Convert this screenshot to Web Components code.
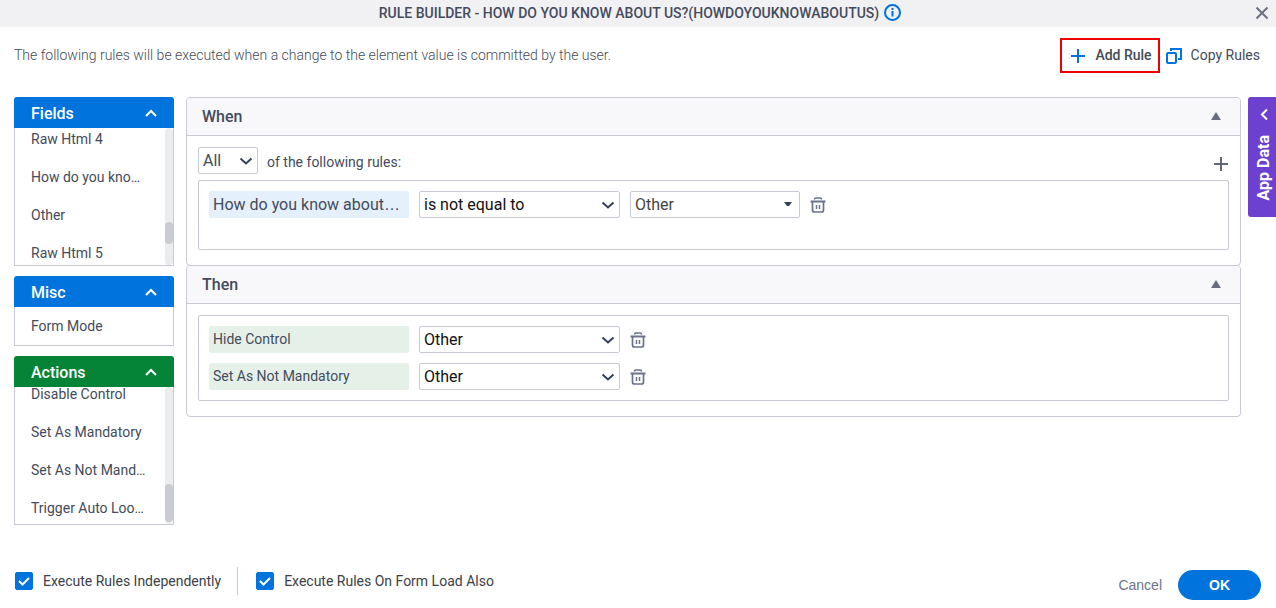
<!DOCTYPE html>
<html lang="en">
<head>
<meta charset="utf-8">
<meta name="viewport" content="width=device-width, initial-scale=1">
<title>Rule Builder</title>
<style>
  body {
    margin: 0;
    background: #fff;
    color: #444b5c;
    font: 14px/20px Roboto, "Liberation Sans", sans-serif;
  }

  /* neighbouring panels share one border */
  rule-panel + rule-panel {
    margin-top: -1px;
  }

  .more {
    font-family: "Liberation Sans", Arial, sans-serif;
  }
</style>
</head>
<body>

<template id="rule-icon-template">
  <style>
    :host {
      display: inline-flex;
      flex: none;
    }

    svg {
      display: block;
      fill: none;
      stroke: currentColor;
      stroke-width: 2;
    }
  </style>
</template>

<template id="rule-dialog-template">
  <style>
    :host {
      display: flex;
      flex-direction: column;
      min-height: 100vh;
    }

    header {
      display: flex;
      align-items: center;
      box-sizing: border-box;
      height: 27px;
      padding: 0 7px 2px 25px;
      background: #f1f1f4;
    }

    h1 {
      display: flex;
      flex: 1;
      align-items: center;
      justify-content: center;
      gap: 5px;
      margin: 0;
      font-size: 14px;
      font-weight: 500;
    }

    h1 rule-icon {
      color: #0073dc;
    }

    .close {
      display: flex;
      padding: 0;
      border: 0;
      background: none;
      color: #6b7080;
    }

    .toolbar {
      display: flex;
      align-items: center;
      height: 35px;
      padding: 11px 16px 24px 14px;
    }

    .toolbar p {
      flex: 1;
      margin: 0;
      padding-bottom: 2px;
      font-weight: 300;
    }

    main {
      display: flex;
      align-items: flex-start;
      padding-left: 14px;
    }

    .side {
      display: flex;
      flex-direction: column;
      flex: none;
      width: 160px;
      gap: 10px;
      margin-right: 12px;
    }

    .panels {
      flex: 1;
      min-width: 0;
      margin-right: 7px;
    }

    footer {
      display: flex;
      align-items: flex-end;
      justify-content: space-between;
      margin-top: auto;
      padding: 0 15px 8px;
    }
  </style>
  <header>
    <h1><slot name="title"></slot><rule-icon name="info"></rule-icon></h1>
    <button class="close" aria-label="Close"><rule-icon name="close"></rule-icon></button>
  </header>
  <div class="toolbar">
    <p><slot name="intro"></slot></p>
    <slot name="tools"></slot>
  </div>
  <main>
    <div class="side"><slot name="side"></slot></div>
    <div class="panels"><slot></slot></div>
    <slot name="tab"></slot>
  </main>
  <footer>
    <slot name="options"></slot>
    <slot name="buttons"></slot>
  </footer>
</template>

<template id="tool-button-template">
  <style>
    :host {
      display: block;
    }

    button {
      display: flex;
      align-items: center;
      gap: 9px;
      height: 35px;
      padding: 0 0 0 6px;
      border: 0;
      background: none;
      color: inherit;
      font: inherit;
    }

    span {
      padding-bottom: 2px;
    }

    rule-icon {
      color: #0073dc;
    }

    :host([highlight]) button {
      gap: 10px;
      padding: 0 6px 0 9px;
      border: 2px solid #f00000;
      font-weight: 500;
    }
  </style>
  <button><rule-icon></rule-icon><span><slot></slot></span></button>
</template>

<template id="side-group-template">
  <style>
    :host {
      --head: #0073dc;
      display: block;
    }

    :host([kind="actions"]) {
      --head: #058337;
    }

    button {
      display: flex;
      align-items: center;
      justify-content: space-between;
      width: 100%;
      height: 31px;
      padding: 2px 17px 0;
      border: 0;
      border-radius: 3px 3px 0 0;
      background: var(--head);
      color: #fff;
      font: inherit;
      font-size: 16px;
      font-weight: 500;
    }

    button rule-icon {
      padding-bottom: 2px;
    }

    .body {
      display: flex;
      border: 1px solid #c8cad3;
      border-top: 0;
    }

    ul {
      flex: 1;
      min-width: 0;
      max-height: 137px;
      margin: 0;
      padding: 0;
      overflow-y: auto;
      list-style: none;
      scrollbar-width: none;
    }

    ::slotted(li) {
      padding: 9px 0 9px 16px;
      white-space: nowrap;
    }

    .track {
      display: none;
      flex: none;
      flex-direction: column;
      width: 8px;
      border-radius: 4px;
      background: #ebecee;
    }

    :host([thumb]) .track {
      display: flex;
    }

    .thumb {
      border-radius: 4px;
      background: #c9ccd1;
    }
  </style>
  <button aria-expanded="true"><slot name="title"></slot><rule-icon name="up"></rule-icon></button>
  <div class="body">
    <ul><slot></slot></ul>
    <div class="track"><div class="thumb"></div></div>
  </div>
</template>

<template id="rule-panel-template">
  <style>
    :host {
      display: block;
      border: 1px solid #c8cad3;
      border-radius: 4px;
      overflow: hidden;
    }

    header {
      display: flex;
      align-items: center;
      justify-content: space-between;
      height: 37px;
      padding: 0 18px 0 15px;
      border-bottom: 1px solid #c8cad3;
      background: #f8f8fa;
    }

    h2 {
      margin: 0;
      font-size: 16px;
      font-weight: 500;
    }

    button {
      display: flex;
      padding: 0 0 2px;
      border: 0;
      background: none;
      color: #686e7e;
    }

    .body {
      display: flex;
      flex-direction: column;
      gap: 6px;
      padding: 11px 11px 15px;
    }

    .rows {
      display: flex;
      flex-direction: column;
      box-sizing: border-box;
      gap: 10px;
      min-height: 70px;
      padding: 10px;
      border: 1px solid #c8cad3;
      border-radius: 2px;
    }
  </style>
  <header>
    <h2><slot name="title"></slot></h2>
    <button aria-label="Collapse"><rule-icon name="triangle"></rule-icon></button>
  </header>
  <div class="body">
    <slot name="match"></slot>
    <div class="rows"><slot></slot></div>
  </div>
</template>

<template id="match-row-template">
  <style>
    :host {
      display: flex;
      align-items: center;
      gap: 9px;
    }

    span {
      flex: 1;
      padding-top: 2px;
    }

    button {
      display: flex;
      padding: 6px 1px 0 0;
      border: 0;
      background: none;
      color: #60677a;
    }
  </style>
  <slot name="select"></slot>
  <span><slot></slot></span>
  <button aria-label="Add condition"><rule-icon name="plus"></rule-icon></button>
</template>

<template id="rule-row-template">
  <style>
    :host {
      display: flex;
      align-items: center;
      gap: 10px;
    }

    .chip {
      flex: none;
      box-sizing: border-box;
      width: 200px;
      height: 27px;
      padding: 0 4px;
      overflow: hidden;
      border-radius: 2px;
      background: #e5f1e8;
      line-height: 27px;
      white-space: nowrap;
    }

    :host([kind="field"]) .chip {
      background: #e4f0fb;
      font-size: 16px;
    }

    button {
      display: flex;
      padding: 0;
      border: 0;
      background: none;
      color: #69738b;
    }
  </style>
  <div class="chip"><slot name="chip"></slot></div>
  <slot></slot>
  <button aria-label="Delete"><rule-icon name="trash"></rule-icon></button>
</template>

<template id="rule-select-template">
  <style>
    :host {
      display: inline-grid;
      flex: none;
      width: 201px;
      color: #111;
    }

    :host([size="small"]) {
      width: 60px;
      color: #444b5c;
    }

    :host([look="combo"]) {
      width: 170px;
      color: #444;
    }

    select {
      grid-area: 1 / 1;
      box-sizing: border-box;
      width: 100%;
      height: 27px;
      padding: 0 24px 0 4px;
      border: 1px solid #c8cad3;
      border-radius: 2px;
      appearance: none;
      background: #fff;
      color: inherit;
      font: inherit;
      font-size: 16px;
    }

    rule-icon {
      grid-area: 1 / 1;
      align-self: center;
      justify-self: end;
      margin-right: 5px;
      color: #344056;
      pointer-events: none;
    }

    :host([look="combo"]) rule-icon {
      margin-right: 8px;
    }
  </style>
  <select></select>
  <rule-icon name="down"></rule-icon>
</template>

<template id="rule-check-template">
  <style>
    :host {
      display: block;
    }

    label {
      display: flex;
      align-items: center;
      gap: 10px;
      color: #3c4048;
    }

    .box {
      display: grid;
      color: #fff;
    }

    input,
    rule-icon {
      grid-area: 1 / 1;
    }

    input {
      width: 18px;
      height: 18px;
      margin: 0;
      border: 1px solid #0073dc;
      border-radius: 2px;
      appearance: none;
    }

    input:checked {
      background: #0073dc;
    }

    rule-icon {
      pointer-events: none;
    }
  </style>
  <label><span class="box"><input type="checkbox" checked><rule-icon name="check"></rule-icon></span><slot></slot></label>
</template>

<template id="check-group-template">
  <style>
    :host {
      display: flex;
      align-items: center;
      height: 28px;
      margin-bottom: 5px;
    }

    ::slotted(:not(:first-child)) {
      margin-left: 16px;
      padding: 4px 0 4px 18px;
      border-left: 1px solid #c8cad3;
    }
  </style>
  <slot></slot>
</template>

<template id="dialog-buttons-template">
  <style>
    :host {
      display: flex;
      align-items: center;
      gap: 16px;
      font-family: "Liberation Sans", Arial, sans-serif;
    }

    button {
      height: 30px;
      padding: 0;
      border: 0;
      background: none;
      color: #6d748a;
      font: inherit;
    }

    .ok {
      width: 83px;
      border-radius: 15px;
      background: #0073dc;
      color: #fff;
      font-weight: bold;
    }
  </style>
  <button><slot name="cancel"></slot></button>
  <button class="ok"><slot name="ok"></slot></button>
</template>

<template id="data-tab-template">
  <style>
    :host {
      display: block;
      flex: none;
    }

    button {
      display: flex;
      flex-direction: column;
      align-items: center;
      gap: 14px;
      box-sizing: border-box;
      width: 28px;
      height: 120px;
      padding: 11px 0 0 3px;
      border: 0;
      border-radius: 3px 0 0 3px;
      background: #6d40cf;
      color: #fff;
      font: bold 16px/20px Roboto, "Liberation Sans", sans-serif;
    }

    span {
      writing-mode: vertical-rl;
      transform: rotate(180deg);
    }
  </style>
  <button><rule-icon name="left"></rule-icon><span><slot></slot></span></button>
</template>

<rule-dialog>
  <span slot="title">RULE BUILDER - HOW DO YOU KNOW ABOUT US?(HOWDOYOUKNOWABOUTUS)</span>
  <span slot="intro">The following rules will be executed when a change to the element value is committed by the user.</span>
  <tool-button slot="tools" icon="plus" highlight>Add Rule</tool-button>
  <tool-button slot="tools" icon="copy">Copy Rules</tool-button>

  <side-group slot="side" scroll="8" thumb="94 22">
    <span slot="title">Fields</span>
    <li>Raw Html 4</li>
    <li>How do you kno…</li>
    <li>Other</li>
    <li>Raw Html 5</li>
  </side-group>
  <side-group slot="side">
    <span slot="title">Misc</span>
    <li>Form Mode</li>
  </side-group>
  <side-group slot="side" kind="actions" scroll="12" thumb="97 38">
    <span slot="title">Actions</span>
    <li>Disable Control</li>
    <li>Set As Mandatory</li>
    <li>Set As Not Mand…</li>
    <li>Trigger Auto Loo…</li>
  </side-group>

  <rule-panel>
    <span slot="title">When</span>
    <match-row slot="match">
      <rule-select slot="select" size="small" label="Match" options="All,Any"></rule-select>
      of the following rules:
    </match-row>
    <rule-row kind="field">
      <span slot="chip">How do you know about<span class="more">…</span></span>
      <rule-select label="Operator" options="is not equal to,is equal to"></rule-select>
      <rule-select look="combo" label="Value" options="Other"></rule-select>
    </rule-row>
  </rule-panel>
  <rule-panel>
    <span slot="title">Then</span>
    <rule-row>
      <span slot="chip">Hide Control</span>
      <rule-select label="Control to hide" options="Other"></rule-select>
    </rule-row>
    <rule-row>
      <span slot="chip">Set As Not Mandatory</span>
      <rule-select label="Control to set as not mandatory" options="Other"></rule-select>
    </rule-row>
  </rule-panel>

  <data-tab slot="tab">App Data</data-tab>

  <check-group slot="options">
    <rule-check>Execute Rules Independently</rule-check>
    <rule-check>Execute Rules On Form Load Also</rule-check>
  </check-group>
  <dialog-buttons slot="buttons">
    <span slot="cancel">Cancel</span>
    <span slot="ok">OK</span>
  </dialog-buttons>
</rule-dialog>

<script>
  // name: [width, height, markup]
  const ICONS = {
    info: [17, 17, '<circle cx="8.5" cy="8.5" r="7.5"/><path d="M8.5 4v2M8.5 7v5.5"/>'],
    close: [14, 14, '<path d="M1.5 1.5l11 11M12.5 1.5l-11 11"/>'],
    plus: [14, 14, '<path d="M7 0v14M0 7h14"/>'],
    copy: [16, 16, '<rect x="1" y="5" width="9" height="10" rx="1"/><path d="M5 3V1h10v10h-3"/>'],
    up: [12, 8, '<path d="M1 7l5-5 5 5"/>'],
    down: [14, 8, '<path d="M1.5 1.5L7 6.5l5.5-5"/>'],
    left: [8, 13, '<path d="M7 1.5L2 6.5l5 5"/>'],
    triangle: [12, 8, '<path d="M1 8L6 0l5 8z" fill="currentColor" stroke="none"/>'],
    combo: [8, 5, '<path d="M0 0h8L5 4H3z" fill="currentColor" stroke="none"/>'],
    check: [18, 18, '<path d="M4 9l3.5 3.5L14 6"/>'],
    trash: [16, 16, '<path d="M0.5 4.5h15" stroke-width="2"/><path d="M4.500 2.500q0-1.500 1.500-1.500h4q1.500 0 1.500 1.500M2.500 5v8q0 2 2 2h7q2 0 2-2V5" stroke-width="1.700"/><path d="M6.500 8v4M9.500 8v4" stroke-width="1.500"/>']
  }

  class TemplateElement extends HTMLElement {
    constructor () {
      super()
      this.shadow = this.attachShadow({ mode: 'open' })
      this._addTemplateToShadow()
    }

    _addTemplateToShadow () {
      const template = document.querySelector(`#${this.localName}-template`)
      this.shadow.appendChild(template.content.cloneNode(true))
    }
  }

  class RuleIcon extends TemplateElement {
    static get observedAttributes () {
      return ['name']
    }

    attributeChangedCallback (attr, old, name) {
      const [width, height, markup] = ICONS[name]
      const svg = this.shadow.querySelector('svg')
      if (svg) svg.remove()
      this.shadow.querySelector('style').insertAdjacentHTML('afterend',
        `<svg width="${width}" height="${height}" viewBox="0 0 ${width} ${height}" aria-hidden="true">${markup}</svg>`)
    }
  }

  class ToolButton extends TemplateElement {
    connectedCallback () {
      this.shadow.querySelector('rule-icon').setAttribute('name', this.getAttribute('icon'))
    }
  }

  class SideGroup extends TemplateElement {
    connectedCallback () {
      if (this.hasAttribute('thumb')) this._placeThumb()
      this.shadow.querySelector('ul').scrollTop = Number(this.getAttribute('scroll'))
    }

    _placeThumb () {
      const [top, height] = this.getAttribute('thumb').split(' ')
      const thumb = this.shadow.querySelector('.thumb')
      thumb.style.marginTop = `${top}px`
      thumb.style.height = `${height}px`
    }
  }

  class RuleSelect extends TemplateElement {
    connectedCallback () {
      const select = this.shadow.querySelector('select')
      select.setAttribute('aria-label', this.getAttribute('label'))
      this.getAttribute('options').split(',').forEach(text => select.add(new Option(text)))
      if (this.getAttribute('look') === 'combo') {
        this.shadow.querySelector('rule-icon').setAttribute('name', 'combo')
      }
    }
  }

  window.customElements.define('rule-icon', RuleIcon)
  window.customElements.define('rule-dialog', class extends TemplateElement {})
  window.customElements.define('tool-button', ToolButton)
  window.customElements.define('side-group', SideGroup)
  window.customElements.define('rule-panel', class extends TemplateElement {})
  window.customElements.define('match-row', class extends TemplateElement {})
  window.customElements.define('rule-row', class extends TemplateElement {})
  window.customElements.define('rule-select', RuleSelect)
  window.customElements.define('rule-check', class extends TemplateElement {})
  window.customElements.define('check-group', class extends TemplateElement {})
  window.customElements.define('dialog-buttons', class extends TemplateElement {})
  window.customElements.define('data-tab', class extends TemplateElement {})
</script>
</body>
</html>
